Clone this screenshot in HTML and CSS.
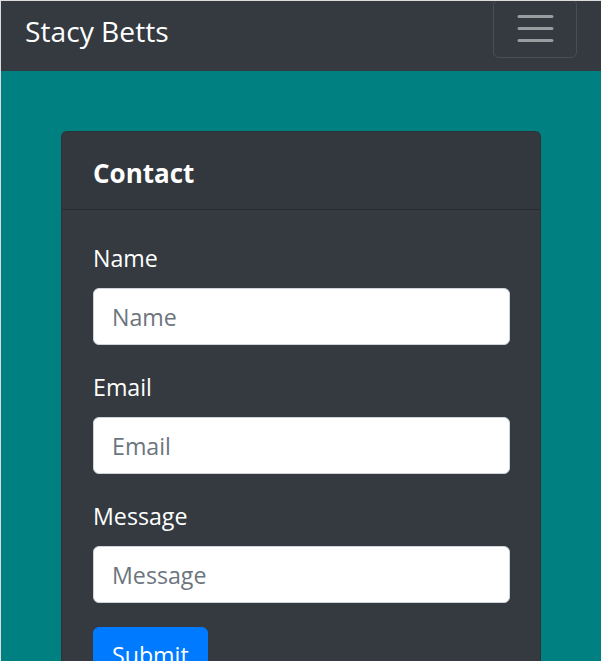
FILE: index.html
```html
<!DOCTYPE html>
<html lang="en">
<head>
<meta charset="utf-8">
<title>Stacy Betts</title>
<link rel="stylesheet" href="styles.css">
</head>
<body>
<nav class="navbar">
  <a class="brand" href="#">Stacy Betts</a>
  <button class="toggler" type="button" aria-label="Toggle navigation">
    <svg class="toggler-icon" viewBox="0 0 30 30" width="45" height="45"><path stroke="rgba(255,255,255,0.5)" stroke-linecap="round" stroke-miterlimit="10" stroke-width="2" d="M4 7h22M4 15h22M4 23h22"/></svg>
  </button>
</nav>
<main class="page">
  <section class="card">
    <header class="card-header"><h5 class="card-title">Contact</h5></header>
    <form class="card-body">
      <div class="form-group">
        <label class="label" for="name">Name</label>
        <input class="input" id="name" type="text" placeholder="Name">
      </div>
      <div class="form-group">
        <label class="label" for="email">Email</label>
        <input class="input" id="email" type="email" placeholder="Email">
      </div>
      <div class="form-group">
        <label class="label" for="message">Message</label>
        <input class="input" id="message" type="text" placeholder="Message">
      </div>
      <button class="btn" type="submit">Submit</button>
    </form>
  </section>
</main>
</body>
</html>
```
FILE: styles.css
```css
* { box-sizing: border-box; }
html, body { margin: 0; padding: 0; }
body {
  font-family: "Open Sans", "Noto Sans", sans-serif;
  font-size: 23.2px;
  line-height: 1.5;
  color: #fff;
  background: #008080;
  border-top: 1px solid #dcdcdc;
  border-left: 1px solid #dcdcdc;
  min-height: 661px;
  overflow: hidden;
}
.navbar {
  display: flex;
  justify-content: space-between;
  align-items: flex-start;
  height: 70px;
  padding: 0 24px;
  background: #343a40;
}
.brand {
  margin-top: 8px;
  font-size: 28.2px;
  line-height: 45px;
  color: #fff;
  text-decoration: none;
}
.toggler {
  margin-top: -2px;
  width: 84px;
  height: 59px;
  padding: 6px 18px;
  background: transparent;
  border: 1px solid rgba(255,255,255,0.1);
  border-radius: 6px;
  display: flex;
  align-items: center;
  justify-content: center;
}
.toggler-icon { display: block; }
.page {
  padding: 60px 60px 0;
}
.card {
  width: 480px;
  background: #343a40;
  border: 1px solid rgba(0,0,0,0.125);
  border-radius: 6px;
}
.card-header {
  height: 78px;
  padding: 0 30px 0 31px;
  display: flex;
  align-items: center;
  border-bottom: 1px solid rgba(0,0,0,0.2);
  background: rgba(0,0,0,0.03);
}
.card-title {
  margin: 0;
  font-size: 26px;
  font-weight: 700;
  line-height: 1.2;
  padding-top: 6px;
}
.card-body {
  padding: 30px 30px 30px 31px;
}
.form-group { margin-bottom: 24px; }
.label {
  display: block;
  margin-bottom: 12px;
  line-height: 36px;
}
.input {
  display: block;
  width: 100%;
  height: 57px;
  padding: 9px 18px;
  font-family: inherit;
  font-size: 23.2px;
  color: #495057;
  background: #fff;
  border: 1px solid #ced4da;
  border-radius: 6px;
}
.input::placeholder { color: #6c757d; }
.btn {
  font-family: inherit;
  font-size: 23.2px;
  line-height: 36px;
  padding: 9px 18px;
  color: #fff;
  background: #007bff;
  border: 1px solid #007bff;
  border-radius: 6px;
}
```
